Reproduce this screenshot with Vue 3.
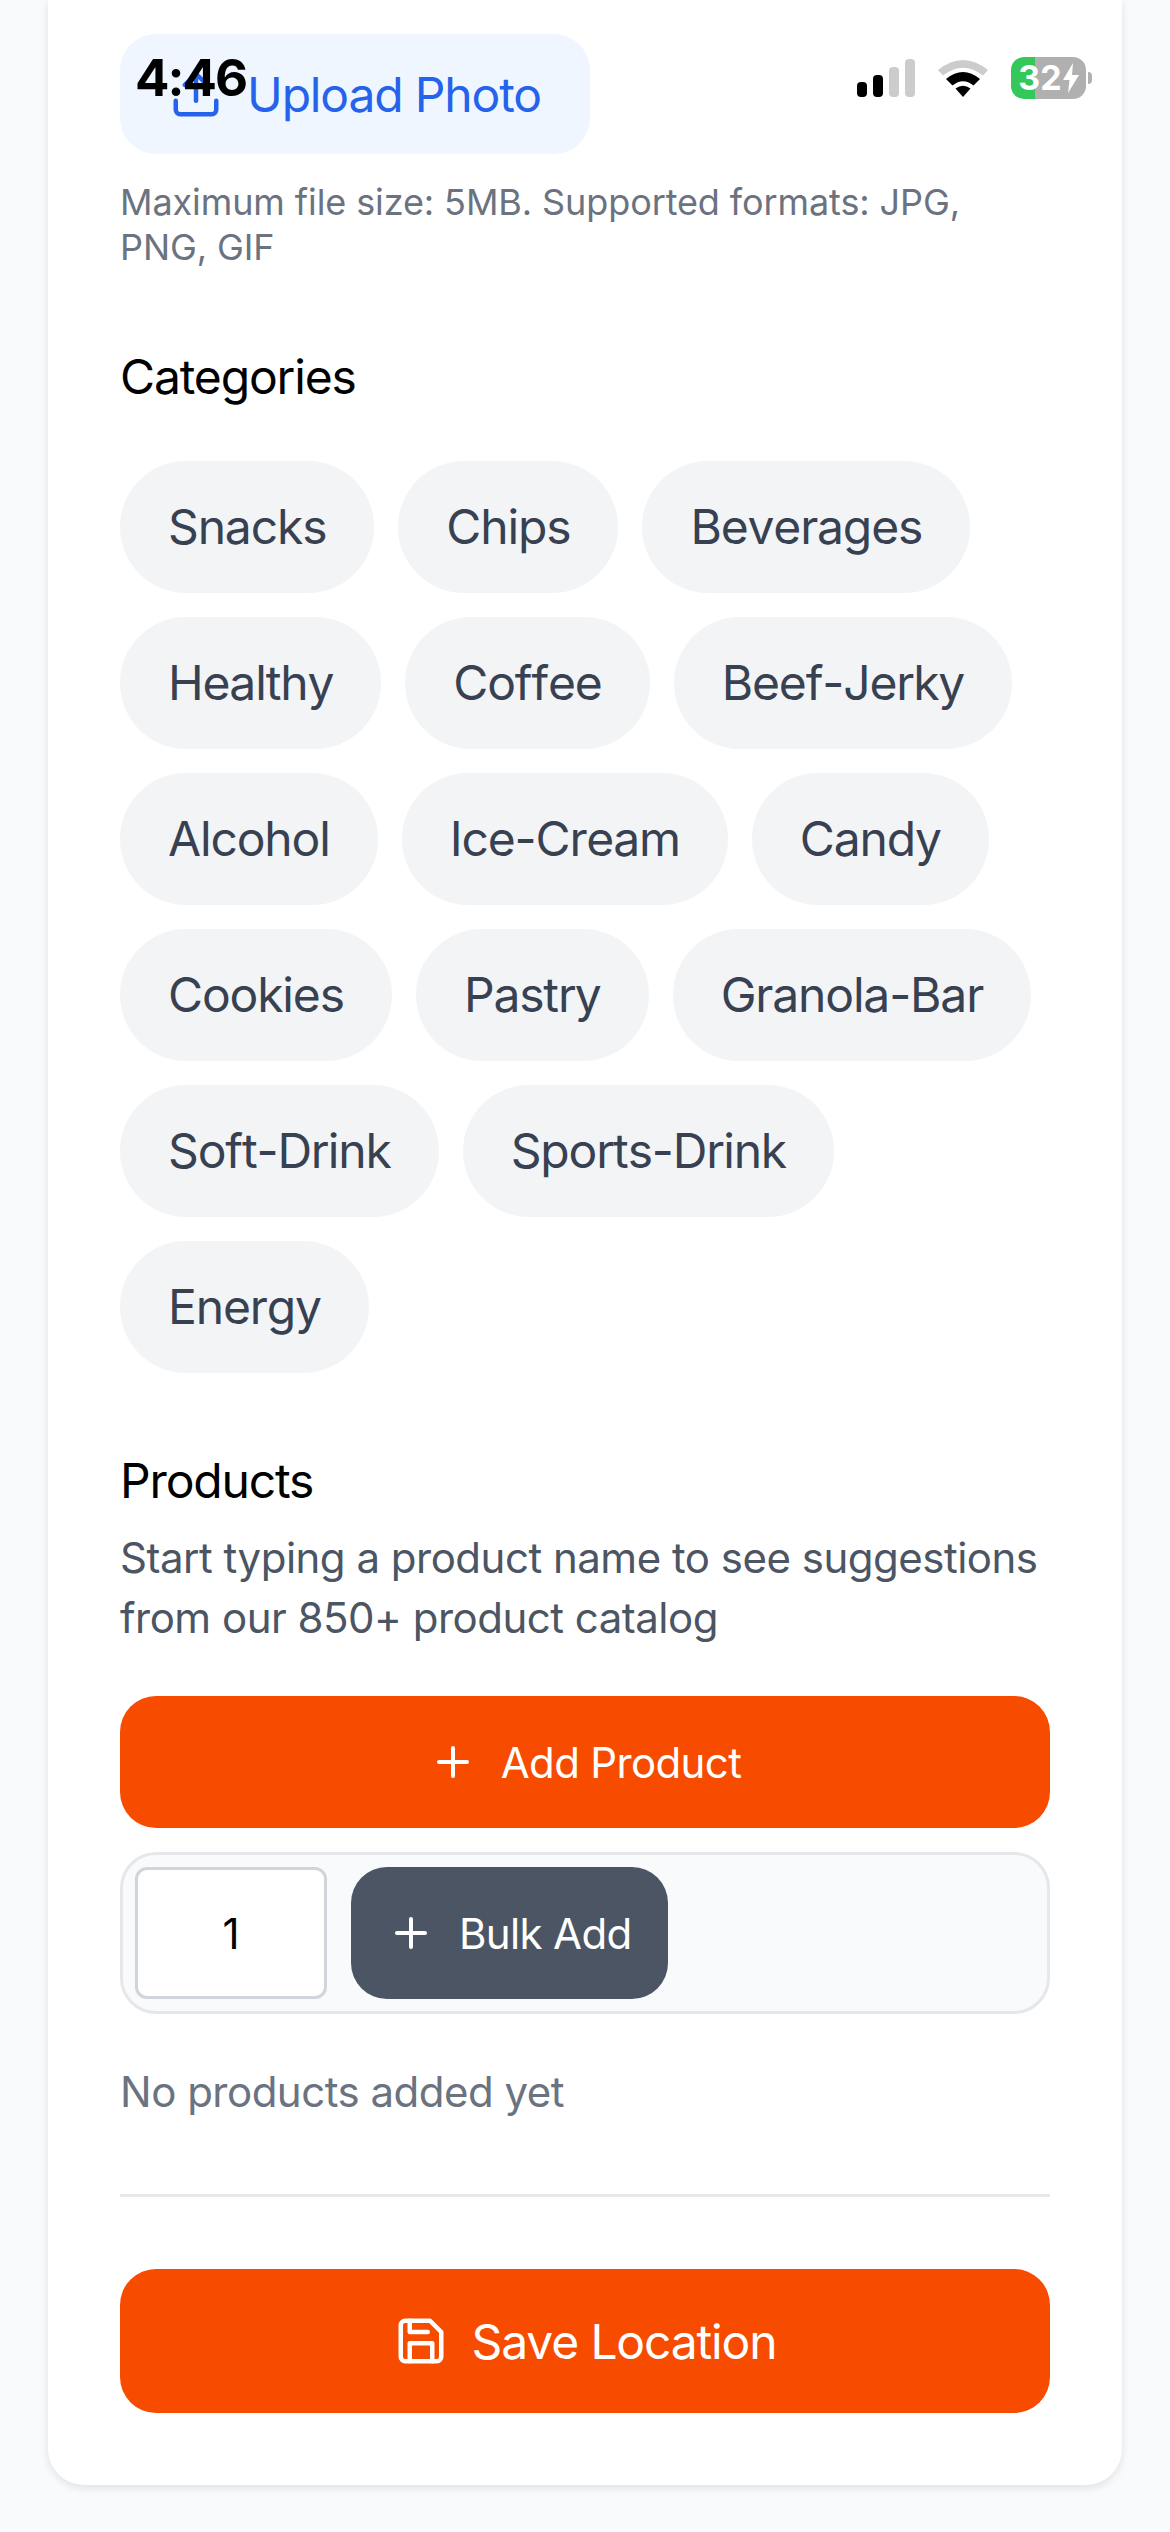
<script setup>
import { ref } from 'vue'

const categories = ref([
  'Snacks', 'Chips', 'Beverages', 'Healthy', 'Coffee', 'Beef-Jerky',
  'Alcohol', 'Ice-Cream', 'Candy', 'Cookies', 'Pastry', 'Granola-Bar',
  'Soft-Drink', 'Sports-Drink', 'Energy'
])
const bulkCount = ref(1)
</script>

<template>
  <div class="page">
    <!-- status bar lies over the scrolled page -->
    <div class="status-bar">
      <span class="time">4:46</span>
      <div class="status-icons">
        <svg class="signal" width="58" height="38" viewBox="0 0 58 38">
          <rect x="0" y="23" width="10" height="15" rx="4" fill="#000" />
          <rect x="16" y="16" width="10" height="22" rx="4" fill="#000" />
          <rect x="32" y="8" width="10" height="30" rx="4" fill="#ccc" />
          <rect x="48" y="0" width="10" height="38" rx="4" fill="#ccc" />
        </svg>
        <svg class="wifi" width="52" height="38" viewBox="0 0 52 38">
          <path d="M1 11 Q26 -9 51 11 L46 16.500 Q26 1 6 16.500 Z" fill="#ccc" />
          <path d="M9 20 Q26 6 43 20 L36.500 26.500 Q26 18 15.500 26.500 Z" fill="#000" />
          <path d="M18.500 29.500 Q26 24 33.500 29.500 L26 38 Z" fill="#000" />
        </svg>
        <div class="battery">
          <div class="battery-body">
            <span>32</span>
            <svg width="16" height="30" viewBox="0 0 16 30">
              <path d="M10 0 L0 17 H6.500 L5 30 L16 12 H9 Z" fill="#fff" />
            </svg>
          </div>
          <div class="battery-nub"></div>
        </div>
      </div>
    </div>

    <div class="card">
      <button class="upload-btn">
        <svg width="54" height="54" viewBox="0 0 24 24" fill="none" stroke="currentColor" stroke-width="2" stroke-linecap="round" stroke-linejoin="round">
          <path d="M21 15v4a2 2 0 0 1-2 2H5a2 2 0 0 1-2-2v-4" />
          <polyline points="17 8 12 3 7 8" />
          <line x1="12" y1="3" x2="12" y2="15" />
        </svg>
        Upload Photo
      </button>
      <p class="hint">Maximum file size: 5MB. Supported formats: JPG, PNG, GIF</p>

      <h3 class="label categories-label">Categories</h3>
      <div class="chips">
        <span v-for="c in categories" :key="c" class="chip">{{ c }}</span>
      </div>

      <h3 class="label products-label">Products</h3>
      <p class="sub">Start typing a product name to see suggestions from our 850+ product catalog</p>

      <button class="add-btn">
        <svg width="48" height="48" viewBox="0 0 24 24" fill="none" stroke="currentColor" stroke-width="2" stroke-linecap="round" stroke-linejoin="round">
          <path d="M5 12h14" />
          <path d="M12 5v14" />
        </svg>
        Add Product
      </button>

      <div class="bulk-row">
        <input v-model="bulkCount" class="bulk-input" type="text" />
        <button class="bulk-btn">
          <svg width="48" height="48" viewBox="0 0 24 24" fill="none" stroke="currentColor" stroke-width="2" stroke-linecap="round" stroke-linejoin="round">
            <path d="M5 12h14" />
            <path d="M12 5v14" />
          </svg>
          Bulk Add
        </button>
      </div>

      <p class="empty">No products added yet</p>

      <div class="footer">
        <button class="save-btn">
          <svg width="54" height="54" viewBox="0 0 24 24" fill="none" stroke="currentColor" stroke-width="2" stroke-linecap="round" stroke-linejoin="round">
            <path d="M19 21H5a2 2 0 0 1-2-2V5a2 2 0 0 1 2-2h11l5 5v11a2 2 0 0 1-2 2z" />
            <polyline points="17 21 17 13 7 13 7 21" />
            <polyline points="7 3 7 8 15 8" />
          </svg>
          Save Location
        </button>
      </div>
    </div>
  </div>
</template>

<style>
html, body { margin: 0; background: #f9fafb; }
</style>

<style scoped>
.page {
  position: relative;
  height: 2532px;
  overflow: hidden;
  padding: 0 48px;
  box-sizing: border-box;
  background: #f9fafb;
  font-family: Inter, "Liberation Sans", sans-serif;
}
.status-bar {
  position: absolute;
  top: 0;
  left: 0;
  right: 0;
  height: 156px;
  display: flex;
  justify-content: space-between;
  align-items: flex-start;
  padding: 50px 78px 0 135px;
  box-sizing: border-box;
}
.time { font-size: 51px; line-height: 56px; font-weight: 700; color: #000; letter-spacing: -2px; }
.status-icons { display: flex; align-items: center; margin-top: 7px; }
.signal { margin-right: 22px; }
.wifi { margin-right: 22px; }
.battery { display: flex; align-items: center; }
.battery-body {
  width: 75px;
  height: 42px;
  border-radius: 13px;
  background: linear-gradient(to right, #34c759 32%, #b0b0b0 32%);
  display: flex;
  align-items: center;
  justify-content: center;
  gap: 1px;
  color: #fff;
  font-size: 34px;
  font-weight: 700;
  line-height: 42px;
}
.battery-nub { width: 4px; height: 12px; margin-left: 2px; background: #b0b0b0; border-radius: 0 6px 6px 0; }

.card {
  background: #fff;
  border-radius: 0 0 36px 36px;
  padding: 34px 72px 72px;
  box-shadow: 0 3px 9px rgba(0, 0, 0, 0.1);
}
button { font-family: inherit; border: none; display: flex; align-items: center; justify-content: center; white-space: nowrap; }
.upload-btn {
  width: 470px;
  height: 120px;
  gap: 24px;
  padding: 0 48px;
  border-radius: 36px;
  background: #eff6ff;
  color: #2563eb;
  font-size: 48px;
  letter-spacing: -1.150px;
}
.hint { margin: 26px 0 0; font-size: 36px; line-height: 45px; color: #6b7280; letter-spacing: -0.100px; }
.label { margin: 0; font-size: 48px; line-height: 60px; font-weight: 400; color: #000; letter-spacing: -1.150px; }
.categories-label { margin-top: 77px; }
.chips { display: flex; flex-wrap: wrap; gap: 24px; margin-top: 54px; }
.chip {
  height: 132px;
  line-height: 132px;
  padding: 0 48px;
  border-radius: 66px;
  background: #f3f4f6;
  color: #374151;
  font-size: 48px;
  letter-spacing: -1.150px;
  font-kerning: none;
}
.products-label { margin-top: 78px; }
.sub { margin: 17px 0 0; font-size: 42px; line-height: 60px; color: #4b5563; letter-spacing: -0.500px; }
.add-btn {
  width: 100%;
  height: 132px;
  margin-top: 48px;
  gap: 24px;
  border-radius: 36px;
  background: #f74b00;
  color: #fff;
  font-size: 42px;
  letter-spacing: -0.650px;
}
.bulk-row {
  display: flex;
  gap: 24px;
  margin-top: 24px;
  padding: 12px;
  border: 3px solid #e5e7eb;
  border-radius: 36px;
  background: #f9fafb;
}
.bulk-input {
  width: 192px;
  height: 132px;
  box-sizing: border-box;
  border: 3px solid #d1d5db;
  border-radius: 12px;
  background: #fff;
  color: #000;
  text-align: center;
  font-family: inherit;
  font-size: 42px;
  padding: 0;
}
.bulk-btn {
  height: 132px;
  padding: 0 36px;
  gap: 24px;
  border-radius: 36px;
  background: #4b5563;
  color: #fff;
  font-size: 42px;
  letter-spacing: -0.650px;
}
.empty { margin: 48px 0 0; font-size: 42px; line-height: 60px; color: #6b7280; letter-spacing: -0.500px; }
.footer { margin-top: 72px; padding-top: 72px; border-top: 3px solid #e5e7eb; }
.save-btn {
  width: 100%;
  height: 144px;
  gap: 24px;
  border-radius: 36px;
  background: #f74b00;
  color: #fff;
  font-size: 48px;
  letter-spacing: -1.150px;
}
</style>
